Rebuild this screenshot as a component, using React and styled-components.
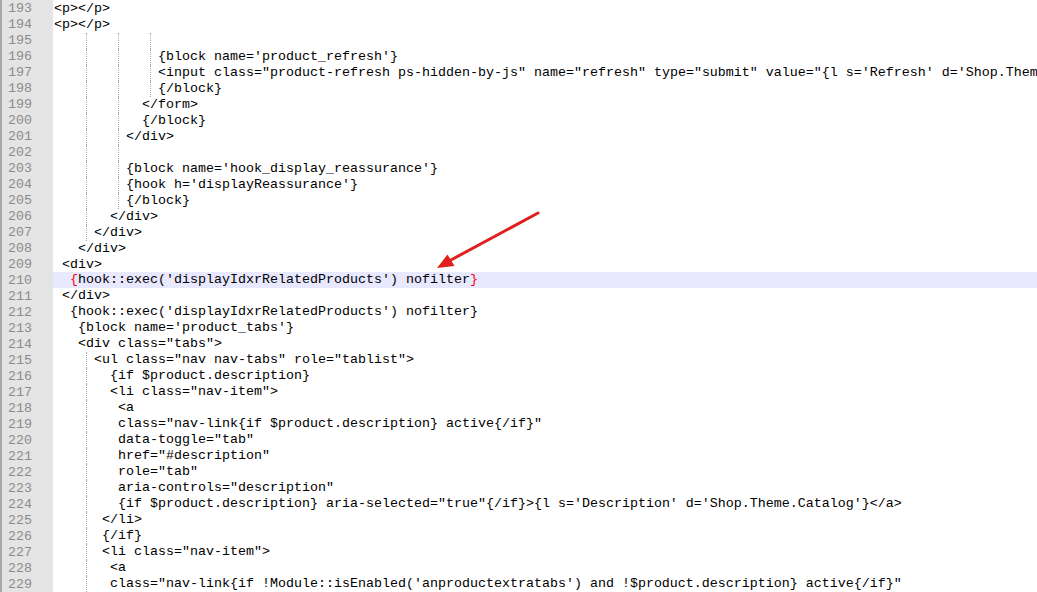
import React from "react";
import styled, { createGlobalStyle } from "styled-components";

const GlobalStyle = createGlobalStyle`
  html, body {
    margin: 0;
    padding: 0;
    background: #ffffff;
    overflow: hidden;
  }
  #root {
    height: 100vh;
  }
`;

const MONO = `"Liberation Mono", "Courier New", monospace`;

const Editor = styled.div`
  position: relative;
  display: flex;
  height: 100vh;
  width: 100vw;
  overflow: hidden;
  font-family: ${MONO};
  font-size: 13.333px;
  line-height: 16px;
  color: #000000;
  background: #ffffff;
`;

const Gutter = styled.div`
  flex: 0 0 53px;
  box-sizing: border-box;
  border-left: 2px solid #a9a9a9;
  background: #e4e4e4;
  padding-top: 1px;
  display: flex;
  flex-direction: column;
`;

const LineNumber = styled.div`
  height: 16px;
  text-align: right;
  padding-right: 21px;
  color: #8c8c8c;
`;

const Code = styled.div`
  flex: 1 1 auto;
  min-width: 0;
  padding-top: 1px;
  display: flex;
  flex-direction: column;
`;

const CodeLine = styled.div`
  height: 16px;
  padding-left: 1px;
  white-space: pre;
  overflow: hidden;
  display: flex;
  align-items: stretch;
  background: ${(p) => (p.$current ? "#e8e8ff" : "transparent")};
`;

const Indent = styled.span`
  display: inline-flex;
  flex: 0 0 auto;
  height: 16px;
`;

const Stop = styled.span`
  display: inline-block;
  box-sizing: border-box;
  height: 16px;
  width: ${(p) => p.$cols * 8}px;
  border-left: ${(p) => (p.$guide ? "1px dotted #a8a8a8" : "none")};
`;

const Text = styled.span`
  white-space: pre;
`;

const Brace = styled.span`
  color: #ff0000;
`;

const Arrow = styled.svg`
  position: absolute;
  left: 430px;
  top: 205px;
  width: 115px;
  height: 70px;
  overflow: visible;
  pointer-events: none;
`;

const lines = [
  { n: 193, indent: 0, text: "<p></p>" },
  { n: 194, indent: 0, text: "<p></p>" },
  { n: 195, indent: 13, text: "" },
  { n: 196, indent: 13, text: "{block name='product_refresh'}" },
  {
    n: 197,
    indent: 13,
    text:
      "<input class=\"product-refresh ps-hidden-by-js\" name=\"refresh\" type=\"submit\" value=\"{l s='Refresh' d='Shop.Theme.Actions'}\">",
  },
  { n: 198, indent: 13, text: "{/block}" },
  { n: 199, indent: 11, text: "</form>" },
  { n: 200, indent: 11, text: "{/block}" },
  { n: 201, indent: 9, text: "</div>" },
  { n: 202, indent: 9, text: "" },
  { n: 203, indent: 9, text: "{block name='hook_display_reassurance'}" },
  { n: 204, indent: 9, text: "{hook h='displayReassurance'}" },
  { n: 205, indent: 9, text: "{/block}" },
  { n: 206, indent: 7, text: "</div>" },
  { n: 207, indent: 5, text: "</div>" },
  { n: 208, indent: 3, text: "</div>" },
  { n: 209, indent: 1, text: "<div>" },
  {
    n: 210,
    indent: 2,
    current: true,
    braces: true,
    text: "hook::exec('displayIdxrRelatedProducts') nofilter",
  },
  { n: 211, indent: 1, text: "</div>" },
  { n: 212, indent: 2, text: "{hook::exec('displayIdxrRelatedProducts') nofilter}" },
  { n: 213, indent: 3, text: "{block name='product_tabs'}" },
  { n: 214, indent: 3, text: "<div class=\"tabs\">" },
  { n: 215, indent: 5, text: "<ul class=\"nav nav-tabs\" role=\"tablist\">" },
  { n: 216, indent: 7, text: "{if $product.description}" },
  { n: 217, indent: 7, text: "<li class=\"nav-item\">" },
  { n: 218, indent: 8, text: "<a" },
  { n: 219, indent: 8, text: "class=\"nav-link{if $product.description} active{/if}\"" },
  { n: 220, indent: 8, text: "data-toggle=\"tab\"" },
  { n: 221, indent: 8, text: "href=\"#description\"" },
  { n: 222, indent: 8, text: "role=\"tab\"" },
  { n: 223, indent: 8, text: "aria-controls=\"description\"" },
  {
    n: 224,
    indent: 8,
    text:
      "{if $product.description} aria-selected=\"true\"{/if}>{l s='Description' d='Shop.Theme.Catalog'}</a>",
  },
  { n: 225, indent: 6, text: "</li>" },
  { n: 226, indent: 6, text: "{/if}" },
  { n: 227, indent: 6, text: "<li class=\"nav-item\">" },
  { n: 228, indent: 7, text: "<a" },
  {
    n: 229,
    indent: 7,
    text:
      "class=\"nav-link{if !Module::isEnabled('anproductextratabs') and !$product.description} active{/if}\"",
  },
];

function IndentGuides({ cols }) {
  const stops = [];
  for (let start = 0, k = 0; start < cols; start += 4, k += 1) {
    const width = Math.min(4, cols - start);
    stops.push(<Stop key={k} $cols={width} $guide={k > 0} />);
  }
  return <Indent>{stops}</Indent>;
}

export default function App() {
  return (
    <>
      <GlobalStyle />
      <Editor>
        <Gutter>
          {lines.map((l) => (
            <LineNumber key={l.n}>{l.n}</LineNumber>
          ))}
        </Gutter>
        <Code>
          {lines.map((l) => (
            <CodeLine key={l.n} $current={l.current}>
              <IndentGuides cols={l.indent} />
              {l.braces ? (
                <Text>
                  <Brace>{"{"}</Brace>
                  {l.text}
                  <Brace>{"}"}</Brace>
                </Text>
              ) : (
                <Text>{l.text}</Text>
              )}
            </CodeLine>
          ))}
        </Code>
        <Arrow viewBox="0 0 115 70">
          <line
            x1="108"
            y1="8"
            x2="20"
            y2="55.5"
            stroke="#e0201c"
            strokeWidth="3"
            strokeLinecap="round"
          />
          <polygon points="7,63 24.5,61 17.5,49.5" fill="#e0201c" />
        </Arrow>
      </Editor>
    </>
  );
}
